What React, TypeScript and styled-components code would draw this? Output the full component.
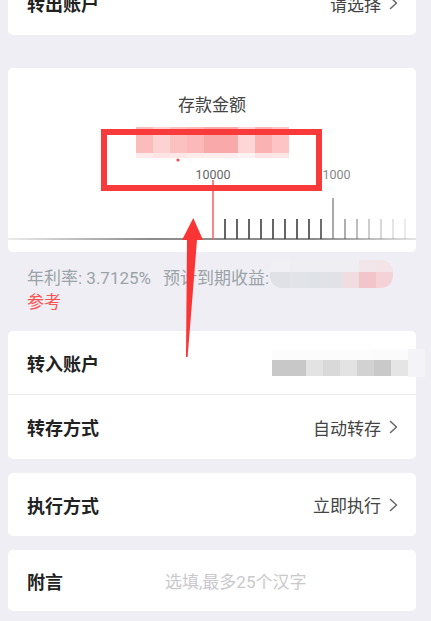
import React, {FC} from "react";
import styled, {createGlobalStyle} from 'styled-components';

const GlobalStyle = createGlobalStyle`
  html, body {
    margin: 0;
    padding: 0;
    background: #efeef4;
    overflow: hidden;
  }
  body {
    font-family: Roboto, "Noto Sans CJK SC", "Noto Sans", sans-serif;
  }
`;

const Page = styled.div`
  width: 431px;
  box-sizing: border-box;
  padding: 0 15px 0 8px;
  margin-top: -29px;
`;

const Card = styled.div<{ $gap?: number }>`
  position: relative;
  background: #fff;
  border-radius: 5px;
  margin-top: ${({$gap}) => $gap ?? 14}px;
`;

const Row = styled.div<{ $h?: number, $divider?: boolean }>`
  display: flex;
  align-items: center;
  justify-content: space-between;
  box-sizing: border-box;
  height: ${({$h}) => $h ?? 64}px;
  padding: 0 18px 0 19px;
  border-bottom: ${({$divider}) => $divider ? '1px solid #ececf0' : 'none'};
`;

const Label = styled.div<{ $w?: number }>`
  font-size: 18px;
  font-weight: 700;
  color: #222;
  flex: ${({$w}) => $w ? `0 0 ${$w}px` : 'none'};
`;

const Value = styled.div`
  display: flex;
  align-items: center;
  gap: 8px;
  font-size: 17px;
  color: #444;
`;

const Placeholder = styled.div`
  flex: 1;
  font-size: 17px;
  color: #c9c9cc;
`;

const AmountCard = styled(Card)`
  padding-top: 25px;
`;

const Title = styled.div`
  text-align: center;
  font-size: 17px;
  line-height: 24px;
  color: #444;
`;

const Info = styled.div`
  padding: 14px 15px 17px 19px;
  font-size: 17px;
  line-height: 24px;
  color: #9aa3a8;
`;

const Expect = styled.span`
  margin-left: 12px;
`;

const Refer = styled.span`
  display: block;
  color: #fb5252;
`;

const MosaicBox = styled.div<{ $radius?: number }>`
  display: inline-flex;
  flex-direction: column;
  overflow: hidden;
  border-radius: ${({$radius}) => $radius ?? 0}px;
`;

const MosaicRow = styled.div<{ $h: number }>`
  display: flex;
  height: ${({$h}) => $h}px;
`;

const Cell = styled.div<{ $w: number, $c: string }>`
  width: ${({$w}) => $w}px;
  background: ${({$c}) => $c};
`;

const AmountMosaic = styled(MosaicBox)`
  display: flex;
  width: 153px;
  margin: 10px auto 0;
`;

const IncomeMosaic = styled(MosaicBox)`
  vertical-align: top;
  margin-top: -6px;
  margin-left: 1px;
`;

const AccountMosaic = styled(MosaicBox)`
  margin-right: -27px;
`;

const Frame = styled.div`
  position: absolute;
  left: 93px;
  top: 61px;
  width: 221px;
  height: 62px;
  box-sizing: border-box;
  border: 6.5px solid #f83a3a;
  z-index: 3;
`;

const ArrowLayer = styled.svg`
  position: absolute;
  left: 0;
  top: 0;
  overflow: visible;
  pointer-events: none;
  z-index: 3;
`;

const RulerSvg = styled.svg`
  display: block;
`;

type CellDef = [number, string];

const Mosaic: FC<{ rows: { h: number, cells: CellDef[] }[], as?: any, radius?: number }> = ({rows, as: Box = MosaicBox, radius}) => (
  <Box $radius={radius}>
    {rows.map((r, i) => (
      <MosaicRow key={i} $h={r.h}>
        {r.cells.map(([w, c], j) => <Cell key={j} $w={w} $c={c}/>)}
      </MosaicRow>
    ))}
  </Box>
);

const Chevron: FC = () => (
  <svg width="9" height="14" viewBox="0 0 9 14">
    <polyline points="1.5,1.5 7.5,7 1.5,12.5" fill="none" stroke="#666" strokeWidth="1.5"
              strokeLinecap="round" strokeLinejoin="round"/>
  </svg>
);

const Ruler: FC = () => {
  const ticks = Array.from({length: 17}, (_, i) => i + 1);
  const fade = [0, .8, .8, .8, .8, .8, .8, .8, .8, .75, .55, .42, .34, .26, .2, .14, .1, .06];
  return (
    <RulerSvg width="408" height="94" viewBox="0 0 408 94">
      <defs>
        <linearGradient id="base" x1="0" x2="1" y1="0" y2="0">
          <stop offset="0" stopColor="#ececec"/>
          <stop offset="0.35" stopColor="#8c8c8c"/>
          <stop offset="0.75" stopColor="#8c8c8c"/>
          <stop offset="1" stopColor="#e4e4e4"/>
        </linearGradient>
      </defs>
      <circle cx="170" cy="2" r="1.6" fill="#f44"/>
      <rect x="0" y="80" width="408" height="2" fill="url(#base)"/>
      {ticks.map(k => {
        const x = 205 + 12 * k;
        const big = k === 10;
        return <rect key={k} x={x - 1} y={big ? 40 : 61} width="2" height={big ? 41 : 20}
                     fill={big ? '#666' : '#3e3e3e'} opacity={fade[k]}/>;
      })}
      <rect x="204.25" y="22" width="1.5" height="59" fill="#f75c5c"/>
      <text x="205" y="21" textAnchor="middle" fontSize="12.5" fill="#666" fontFamily="Roboto, sans-serif">10000</text>
      <text x="325" y="21" textAnchor="middle" fontSize="12.5" fill="#888" fontFamily="Roboto, sans-serif">11000</text>
    </RulerSvg>
  );
};

const amountRows = [
  {h: 26, cells: [[17, '#fbbcbc'], [17, '#fcd2d2'], [17, '#fbc0c0'], [17, '#fbb9b9'], [34, '#f9a9a9'], [17, '#fdd6d6'], [17, '#fbb2b2'], [17, '#fcc4c4']] as CellDef[]},
  {h: 5, cells: [[17, '#feeaea'], [17, '#fee4e4'], [17, '#fde6e6'], [17, '#fdecec'], [34, '#feeded'], [17, '#fff2f2'], [17, '#fde4e4'], [17, '#fde6e6']] as CellDef[]},
];

const incomeRows = [
  {h: 12, cells: [[20, '#f1f0f4'], [19, '#efeff3'], [16, '#eeeef3'], [17, '#efeef3'], [17, '#efeef3'], [17, '#f3e6ea'], [17, '#f4e4e8']] as CellDef[]},
  {h: 16, cells: [[20, '#e0e1e6'], [19, '#e2e3e8'], [16, '#dfe2e7'], [17, '#e1e2e7'], [17, '#f0dde1'], [17, '#f2c5cb'], [17, '#f4d3d8']] as CellDef[]},
];

const accountRows = [
  {h: 11, cells: [[34, '#fcfcfc'], [17, '#fcfcfc'], [17, '#fcfcfc'], [17, '#fcfcfc'], [17, '#fcfcfc'], [17, '#fbfbfb'], [17, '#fbfbfb'], [17, '#f4f4f6']] as CellDef[]},
  {h: 16, cells: [[34, '#c8c8c8'], [17, '#e3e3e3'], [17, '#d9d9d9'], [17, '#e3e3e3'], [17, '#d2d2d2'], [17, '#c9c9c9'], [17, '#e5e5e5'], [17, '#f4f4f6']] as CellDef[]},
  {h: 1, cells: [[136, '#fff'], [17, '#f4f4f6']] as CellDef[]},
];

const App: FC = () => (
  <>
    <GlobalStyle/>
    <Page>
      <Card $gap={0}>
        <Row>
          <Label>转出账户</Label>
          <Value>请选择<Chevron/></Value>
        </Row>
      </Card>

      <AmountCard $gap={33}>
        <Title>存款金额</Title>
        <Mosaic rows={amountRows} as={AmountMosaic}/>
        <Ruler/>
        <Frame/>
        <ArrowLayer width="408" height="300" viewBox="0 0 408 300">
          <polygon
            points="185.3,150 195,172 189,172 179.6,289 178,289 179,172 174,172"
            fill="#fa3535"/>
        </ArrowLayer>
      </AmountCard>

      <Info>
        年利率: 3.7125%<Expect>预计到期收益:</Expect>
        <Mosaic rows={incomeRows} as={IncomeMosaic} radius={12}/>
        <Refer>参考</Refer>
      </Info>

      <Card $gap={0}>
        <Row $divider>
          <Label>转入账户</Label>
          <Mosaic rows={accountRows} as={AccountMosaic}/>
        </Row>
        <Row>
          <Label>转存方式</Label>
          <Value>自动转存<Chevron/></Value>
        </Row>
      </Card>

      <Card>
        <Row $h={63}>
          <Label>执行方式</Label>
          <Value>立即执行<Chevron/></Value>
        </Row>
      </Card>

      <Card>
        <Row $h={61}>
          <Label $w={138}>附言</Label>
          <Placeholder>选填,最多25个汉字</Placeholder>
        </Row>
      </Card>
    </Page>
  </>
);

export default App;
